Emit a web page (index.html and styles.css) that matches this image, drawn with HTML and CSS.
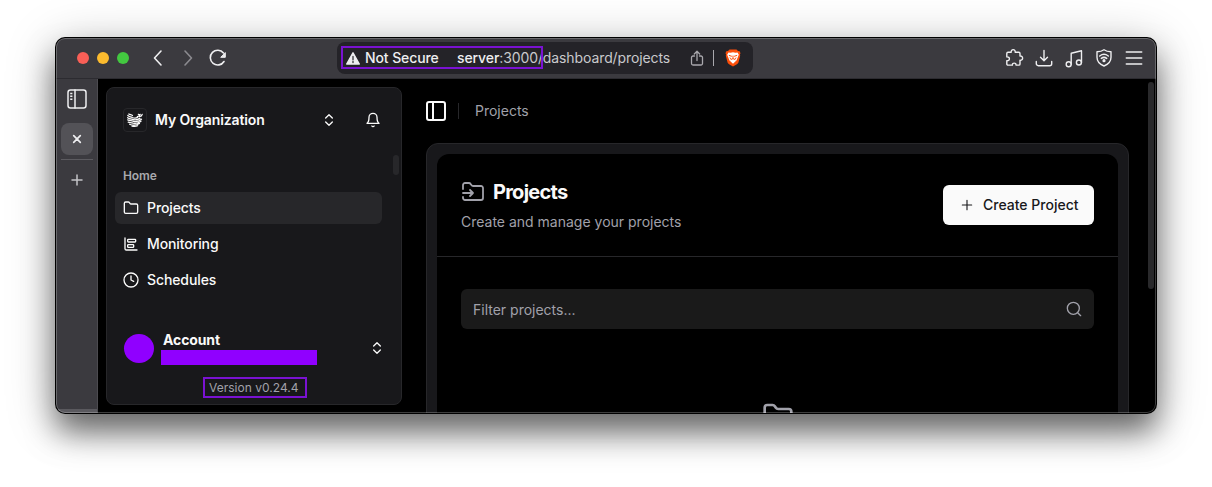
FILE: index.html
```html
<!DOCTYPE html>
<html lang="en">
<head>
<meta charset="utf-8">
<title>Projects</title>
<link rel="stylesheet" href="styles.css">
</head>
<body>
<div class="window">
  <header class="toolbar">
    <div class="lights"><i class="red"></i><i class="yellow"></i><i class="green"></i></div>
    <nav class="history">
      <svg width="20" height="20" viewBox="0 0 20 20"><path d="M13 3 6.500 10l6.500 7"/></svg>
      <svg class="dim" width="20" height="20" viewBox="0 0 20 20"><path d="m7 3 6.500 7L7 17"/></svg>
      <svg width="20" height="20" viewBox="0 0 20 20"><path d="M16 13.500A7.400 7.400 0 1 1 15.500 5"/><path class="solid" d="M17.300 5v4.300h-4.200z" stroke-width="1"/></svg>
    </nav>
    <div class="address">
      <svg class="warn" width="14" height="13" viewBox="0 0 14 13"><path class="solid" d="M7 .8 13.300 12H.7z" stroke-width="1.400"/><path d="M7 4.500v3.200M7 9.500v1" stroke="#555458" stroke-width="1.600"/></svg>
      <span class="secure">Not Secure</span>
      <span class="url"><b>server</b>:3000/dashboard/projects</span>
      <svg class="share" width="14" height="17" viewBox="0 0 14 17"><path d="M4.500 6H3a1.500 1.500 0 0 0-1.500 1.500v6A1.500 1.500 0 0 0 3 15h8a1.500 1.500 0 0 0 1.500-1.500v-6A1.500 1.500 0 0 0 11 6H9.500M7 10.500V1.500M4.300 4 7 1.300 9.700 4"/></svg>
      <span class="bar"></span>
      <svg class="brave" width="16" height="18" viewBox="0 0 16 18"><path d="M4.500.5h7L13 2l1.700.3.8 2-.6 1.200.3 1.300-1.700 6.400c-.3 1-1 1.500-2 2.200L8 17.500l-3.500-2.100c-1-.7-1.700-1.200-2-2.200L.8 6.800l.3-1.300L.5 4.300l.8-2L3 2z" fill="#fb4f0b" stroke="none"/><path d="m3.500 3.500 2 .3L8 3.300l2.500.5 2-.3 1.300 2.300-1.500 3.700-.8 1.900L8 14.800l-3.500-3.400-.8-1.900-1.500-3.700z" fill="#fff" stroke="none"/><path d="m4.200 6.500 2.300.7M11.800 6.500l-2.300.7M8 7v2.200M6 10.500l2-.9 2 .9M5 9l.8.5M11 9l-.8.5" stroke="#fb4f0b" stroke-width="1"/></svg>
      <span class="mark mark-url"></span>
    </div>
    <div class="tools">
      <svg width="20" height="20" viewBox="0 0 20 20"><path d="M4 4.300h3.200c-.2-1.700.7-2.700 2-2.700s2.200 1 2 2.700h3.600c.7 0 1.200.5 1.200 1.200v2.600c1.600-.2 2.600.8 2.600 2.100s-1 2.300-2.600 2.100v3.600c0 .7-.5 1.200-1.200 1.200H12c.1-1.400-.8-2-1.800-2s-1.900.6-1.800 2H4c-.7 0-1.200-.5-1.200-1.200v-3.100c1.800.1 2.600-.8 2.600-2s-.8-2-2.600-1.900V5.500c0-.7.500-1.200 1.200-1.200z"/></svg>
      <svg width="20" height="20" viewBox="0 0 20 20"><path d="M10 2.500v10M6.500 9.200l3.500 3.500 3.500-3.500M2.300 13.500v2.200a2 2 0 0 0 2 2h11.400a2 2 0 0 0 2-2v-2.200"/></svg>
      <svg width="20" height="20" viewBox="0 0 20 20"><circle cx="4.700" cy="16.200" r="2.500"/><circle cx="14.900" cy="14.500" r="2.500"/><path d="M7.200 16.200V5.200l10.300-2.400v11.700"/></svg>
      <svg width="20" height="20" viewBox="0 0 20 20"><path d="M10 1.800c2 1.500 4.500 2 7 2v5.500c0 4.200-3 7.200-7 8.700-4-1.500-7-4.500-7-8.700V3.800c2.500 0 5-.5 7-2z"/><path d="M5.700 8c2.600-2 6-2 8.600 0M7.300 10.400c1.700-1.300 3.700-1.300 5.400 0" stroke-width="1.500"/><circle class="solid" cx="10" cy="12.700" r=".9"/></svg>
      <svg width="20" height="20" viewBox="0 0 20 20"><path d="M2.300 4h15.400M2.300 10h15.400M2.300 16h15.400" stroke-width="1.500"/></svg>
    </div>
  </header>
  <div class="body">
    <aside class="tabs">
      <svg width="20" height="20" viewBox="0 0 20 20"><rect x="1" y="1" width="18" height="18" rx="2.500"/><path d="M8 1v18"/><path d="M3.200 4.500h2.600M3.200 7.300h2.600M3.200 10.200h2.600" stroke-linecap="butt" stroke-dasharray="1.800 .4"/></svg>
      <div class="tab"><svg width="10" height="10" viewBox="0 0 10 10"><path d="m1.700 1.700 6.600 6.600M8.300 1.700l-6.600 6.600" stroke-width="1.700"/></svg></div>
      <div class="rule"></div>
      <svg class="new" width="12" height="12" viewBox="0 0 12 12"><path d="M6 1v10M1 6h10"/></svg>
      <div class="foot"></div>
    </aside>
    <div class="page">
      <aside class="side">
        <div class="org">
          <span class="logo"><svg width="18" height="16" viewBox="0 0 18 16"><path d="M1.800 3.500c1.200 1.300 3 1.200 4.500 2 1.600.8 3.700.8 5.400-.2M1.600 5.700c1.700 1.200 3.300.9 5 1.700 1.900.8 4.700.5 7.400-1M1.700 7.900c2 1 3.700.6 5.300 1.300 2.300 1 5.500.3 8.500-2M2.200 10.100c1.800.6 3 .2 4.800 1 2.300.8 5.300.2 8-1.900M3.600 12.200c2.800 1.300 6.600 1.300 9.900-.7M6 14.100c1.800.5 4 .4 5.600-.4M2.800 2c1 .7 2.600.7 3.700 1.500M11.300 4.500c1.800 0 2.500-.8 2.900-2.200M13.500 4.700c1.500-.2 2.400-1 2.700-2.400M12.300 2.300l1.700.5"/></svg></span>
          <strong>My Organization</strong>
          <svg class="updown" width="16" height="16" viewBox="0 0 24 24"><path d="m7 15 5 5 5-5M7 9l5-5 5 5"/></svg>
          <svg class="bell" width="16" height="16" viewBox="0 0 24 24"><path d="M6 8a6 6 0 0 1 12 0c0 7 3 9 3 9H3s3-2 3-9M10.300 21a1.940 1.940 0 0 0 3.400 0"/></svg>
        </div>
        <div class="group">Home</div>
        <nav class="menu">
          <a class="active"><svg width="16" height="16" viewBox="0 0 24 24"><path d="M20 20a2 2 0 0 0 2-2V8a2 2 0 0 0-2-2h-7.900a2 2 0 0 1-1.690-.9L9.600 3.900A2 2 0 0 0 7.930 3H4a2 2 0 0 0-2 2v13a2 2 0 0 0 2 2Z"/></svg>Projects</a>
          <a><svg width="16" height="16" viewBox="0 0 24 24"><path d="M3 3v16a2 2 0 0 0 2 2h16"/><rect x="7" y="5" width="12" height="4" rx="1"/><rect x="7" y="13" width="9" height="4" rx="1"/></svg>Monitoring</a>
          <a><svg width="16" height="16" viewBox="0 0 24 24"><circle cx="12" cy="12" r="10.500"/><path d="M12 6v6l4 2"/></svg>Schedules</a>
        </nav>
        <div class="account">
          <span class="avatar"></span>
          <div class="who"><strong>Account</strong><span class="redacted"></span></div>
          <svg width="16" height="16" viewBox="0 0 24 24"><path d="m7 15 5 5 5-5M7 9l5-5 5 5"/></svg>
        </div>
        <div class="version">Version v0.24.4</div>
        <span class="side-scroll"></span>
      </aside>
      <main class="main">
        <div class="crumbs">
          <svg width="24" height="24" viewBox="0 0 24 24"><rect x="3" y="3" width="18" height="18" rx="2"/><path d="M9 3v18"/></svg>
          <span class="sep"></span><span>Projects</span>
        </div>
        <section class="frame">
          <div class="card">
            <div class="head">
              <div>
                <h1><svg width="24" height="24" viewBox="0 0 24 24"><path d="M2 9V5a2 2 0 0 1 2-2h3.900a2 2 0 0 1 1.690.9l.81 1.200a2 2 0 0 0 1.670.9H20a2 2 0 0 1 2 2v10a2 2 0 0 1-2 2H4a2 2 0 0 1-2-2v-1M2 13h10M9 16l3-3-3-3"/></svg>Projects</h1>
                <p>Create and manage your projects</p>
              </div>
              <button class="create"><svg width="16" height="16" viewBox="0 0 24 24"><path d="M5 12h14M12 5v14"/></svg>Create Project</button>
            </div>
            <div class="content">
              <div class="filter"><span>Filter projects...</span><svg width="16" height="16" viewBox="0 0 24 24"><circle cx="11" cy="11" r="9"/><path d="m22 22-4.500-4.500"/></svg></div>
              <svg class="empty" width="32" height="32" viewBox="0 0 24 24"><path d="M20 20a2 2 0 0 0 2-2V8a2 2 0 0 0-2-2h-7.900a2 2 0 0 1-1.690-.9L9.600 3.900A2 2 0 0 0 7.930 3H4a2 2 0 0 0-2 2v13a2 2 0 0 0 2 2Z"/></svg>
            </div>
          </div>
        </section>
        <span class="page-scroll"></span>
      </main>
    </div>
  </div>
</div>
</body>
</html>
```
FILE: styles.css
```css
* { box-sizing: border-box; }
body {
  margin: 0;
  height: 487px;
  padding: 38px 56px;
  overflow: hidden;
  background: #fff;
  color: #fafafa;
  font: 14px/20px Inter, "Liberation Sans", sans-serif;
}
svg {
  display: block;
  flex: none;
  fill: none;
  stroke: currentColor;
  stroke-width: 2;
  stroke-linecap: round;
  stroke-linejoin: round;
}
.solid { fill: currentColor; }
.window {
  position: relative;
  width: 1100px;
  height: 375px;
  border-radius: 9px;
  background: #000;
  overflow: hidden;
  display: flex;
  flex-direction: column;
  box-shadow: 0 0 0 1px #000, 0 19px 30px rgba(0, 0, 0, .5), 0 8px 50px rgba(0, 0, 0, .27);
}
.window::after {
  content: "";
  position: absolute;
  inset: 0;
  border: 1px solid rgba(255, 255, 255, .24);
  border-radius: 9px;
}

/* Browser toolbar */
.toolbar {
  height: 41px;
  flex: none;
  display: flex;
  align-items: center;
  padding: 0 12px 0 21px;
  background: #3b3a3f;
  border-bottom: 1px solid #2c2b30;
  color: #eeeef0;
}
.toolbar svg { stroke-width: 1.6; }
.lights { display: flex; gap: 8px; }
.lights i { width: 12px; height: 12px; border-radius: 50%; }
.red { background: #f95f57; }
.yellow { background: #fcbb2e; }
.green { background: #43c840; }
.history { display: flex; gap: 10px; margin-left: 19px; }
.dim { color: #8b8a8f; }
.address {
  position: relative;
  width: 416px;
  height: 32px;
  margin-left: 109px;
  padding: 0 12px 0 9px;
  border-radius: 8px;
  background: #242328;
  display: flex;
  align-items: center;
}
.toolbar .warn { stroke-width: 1; }
.secure { width: 92px; margin-left: 5px; font-weight: 500; letter-spacing: -.1px; white-space: nowrap; }
.url { flex: 1; color: #c9c9cc; letter-spacing: -.1px; white-space: nowrap; }
.url b { color: #eeeef0; font-weight: 500; }
.toolbar .share { color: #a9a8ad; stroke-width: 1.3; }
.bar { width: 1px; height: 16px; margin: 0 11px 0 9px; background: #a9a8ad; }
.mark { position: absolute; border: 2px solid #7a12d2; }
.mark-url { left: 4px; top: 4px; width: 202px; height: 23px; }
.tools { display: flex; gap: 10px; margin-left: auto; }
.toolbar .tools svg { stroke-width: 1.4; }

/* Vertical tab strip */
.body { flex: 1; min-height: 0; display: flex; }
.tabs {
  width: 42px;
  flex: none;
  display: flex;
  flex-direction: column;
  align-items: center;
  padding-top: 10px;
  background: #3b3a3f;
  border-right: 1px solid #4c4b50;
  color: #eeeef0;
}
.tabs svg { stroke-width: 1.5; }
.tab {
  width: 32px;
  height: 32px;
  margin-top: 14px;
  border-radius: 8px;
  background: #535257;
  display: grid;
  place-items: center;
}
.rule { width: 32px; height: 1px; margin: 4px 0 14px; background: #5c5b60; }
.new { color: #c4c4c8; }
.foot { width: 41px; height: 4px; margin-top: auto; background: #5a595e; }

/* Application sidebar */
.page { flex: 1; min-width: 0; display: flex; padding-left: 8px; }
.side {
  position: relative;
  width: 296px;
  height: 318px;
  flex: none;
  margin-top: 8px;
  padding: 0 8px;
  border: 1px solid #27272a;
  border-radius: 8px;
  background: #18181b;
}
.org { display: flex; align-items: center; height: 64px; padding: 0 12px 0 8px; }
.org strong { flex: 1; margin-left: 8px; font-weight: 600; letter-spacing: -.12px; }
.logo {
  width: 24px;
  height: 24px;
  border: 1px solid #27272a;
  border-radius: 4px;
  display: grid;
  place-items: center;
}
.logo svg { stroke-width: 1.25; }
.bell { margin-left: 28px; }
.group {
  height: 32px;
  margin-top: 8px;
  padding-left: 8px;
  line-height: 32px;
  font-size: 12px;
  font-weight: 600;
  letter-spacing: -.08px;
  color: #a9a9ad;
}
.menu { display: flex; flex-direction: column; gap: 4px; }
.menu a {
  display: flex;
  align-items: center;
  gap: 8px;
  width: 267px;
  height: 32px;
  padding: 0 8px;
  border-radius: 6px;
  font-weight: 500;
  letter-spacing: -.1px;
}
.menu .active { background: #27272a; }
.account {
  display: flex;
  align-items: center;
  height: 48px;
  margin-top: 28px;
  padding: 0 8px;
}
.avatar { width: 30px; height: 29px; margin-left: .5px; border-radius: 50%; background: #9000ff; }
.who { flex: 1; display: flex; flex-direction: column; padding-left: 8.5px; }
.who strong { height: 18px; padding-left: 1px; font-weight: 700; line-height: 16px; letter-spacing: -.12px; }
.redacted { width: 156px; height: 15px; margin-left: -1px; background: #9000ff; }
.version {
  width: 104px;
  height: 21px;
  margin: 5px auto 0 88px;
  padding-left: 4px;
  border: 2px solid #7a12d2;
  font-size: 12px;
  line-height: 18px;
  letter-spacing: .02px;
  color: #a1a1aa;
  white-space: nowrap;
}
.side-scroll {
  position: absolute;
  top: 67px;
  right: 2px;
  width: 6px;
  height: 20px;
  border-radius: 3px;
  background: #27272a;
}

/* Main content */
.main { position: relative; flex: 1; min-width: 0; padding: 0 27px 0 24px; overflow: hidden; }
.crumbs { display: flex; align-items: center; height: 64px; margin-left: -2px; color: #a1a1aa; }
.crumbs svg { color: #fafafa; }
.sep { width: 1px; height: 16px; margin: 0 16px 0 10px; background: #27272a; }
.frame {
  height: 340px;
  padding: 10px;
  border: 1px solid #27272a;
  border-radius: 12px;
  background: #18181b;
}
.card { height: 320px; border-radius: 12px; background: #000; }
.head {
  height: 103px;
  padding: 0 24px;
  border-bottom: 1px solid #27272a;
  display: flex;
  align-items: center;
  justify-content: space-between;
}
.head h1 {
  display: flex;
  align-items: center;
  gap: 8px;
  height: 28px;
  margin: 0;
  font-size: 20px;
  font-weight: 700;
  letter-spacing: -.75px;
}
.head h1 svg { color: #a1a1aa; stroke-width: 1.8; }
.head p { margin: 6px 0 0; color: #a1a1aa; }
.create {
  display: flex;
  align-items: center;
  gap: 8px;
  width: 151px;
  height: 40px;
  padding: 0 16px;
  border: 0;
  border-radius: 6px;
  background: #fafafa;
  color: #18181b;
  font: inherit;
  font-weight: 500;
  white-space: nowrap;
}
.create svg { stroke-width: 1.7; }
.content { padding: 32px 24px; }
.filter {
  display: flex;
  align-items: center;
  justify-content: space-between;
  height: 40px;
  padding: 0 12px;
  border-radius: 6px;
  background: #1a1a1a;
  color: #a1a1aa;
}
.filter span { padding-top: 2px; }
.empty { margin: 72px auto 0; color: #a1a1aa; }
.page-scroll {
  position: absolute;
  top: 3px;
  right: 2px;
  width: 6px;
  height: 207px;
  border-radius: 3px;
  background: #29292b;
}
```
